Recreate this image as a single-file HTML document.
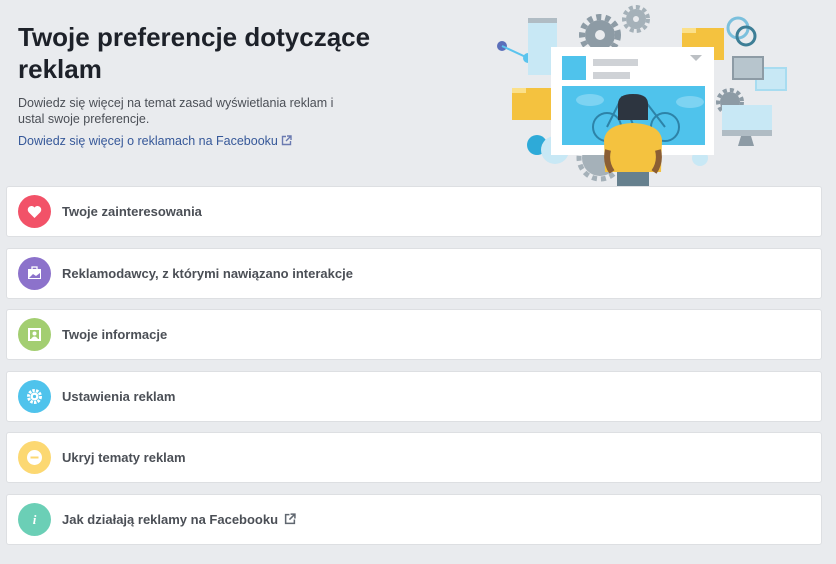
<!DOCTYPE html>
<html><head><meta charset="utf-8"><style>
body{margin:0;width:836px;height:564px;background:#e9ebee;font-family:"Liberation Sans",Arial,sans-serif;position:relative;overflow:hidden}
h1{position:absolute;left:18px;top:21px;margin:0;font-size:26px;line-height:32px;font-weight:bold;color:#1d2129;width:400px}
.d{position:absolute;left:18px;top:95px;font-size:12.5px;line-height:16px;color:#4b4f56;width:345px}
.l{position:absolute;left:18px;top:134px;font-size:12.5px;color:#365899}
.c{position:absolute;left:6px;width:814px;height:49px;background:#fff;border:1px solid #dddfe2;border-radius:3px}
.c .i{position:absolute;left:11px;top:8px;width:33px;height:33px;border-radius:50%}
.c span{position:absolute;left:55px;top:17px;font-size:13px;font-weight:bold;color:#4b4f56}
</style></head><body>
<h1>Twoje preferencje dotyczące reklam</h1>
<div class="d">Dowiedz się więcej na temat zasad wyświetlania reklam i ustal swoje preferencje.</div>
<div class="l">Dowiedz się więcej o reklamach na Facebooku <svg width="11" height="11" viewBox="0 0 11 11" style="vertical-align:-1px"><path d="M5 1.5H1.5v8h8V6" fill="none" stroke="#6a7ab0" stroke-width="1.4"/><path d="M6 1h4v4M10 1L5 6" fill="none" stroke="#6a7ab0" stroke-width="1.4"/></svg></div>

<svg style="position:absolute;left:490px;top:0" width="300" height="188" viewBox="0 0 300 188">
<circle cx="12" cy="46" r="5" fill="#5b6fba"/><path d="M12 46L38 58 58 38" stroke="#5bc4ee" stroke-width="2" fill="none"/><circle cx="38" cy="58" r="5" fill="#5bc4ee"/><circle cx="58" cy="38" r="5" fill="#5bc4ee"/>
<rect x="38" y="18" width="29" height="57" fill="#c8e8f5"/><rect x="38" y="18" width="29" height="5" fill="#b0bcc4"/>
<circle cx="110" cy="35" r="15" fill="#8d9ba5"/><circle cx="110" cy="35" r="18" fill="none" stroke="#8d9ba5" stroke-width="6" stroke-dasharray="5 4"/><circle cx="110" cy="35" r="5" fill="#e9ebee"/>
<circle cx="146" cy="19" r="10" fill="#a5b1b9"/><circle cx="146" cy="19" r="12" fill="none" stroke="#a5b1b9" stroke-width="4" stroke-dasharray="4 3"/><circle cx="146" cy="19" r="3" fill="#e9ebee"/>
<rect x="192" y="28" width="42" height="32" fill="#f4c23f"/><rect x="192" y="28" width="14" height="5" fill="#fbe08a"/>
<circle cx="248" cy="28" r="10" fill="none" stroke="#7bc0dd" stroke-width="3"/><circle cx="256" cy="36" r="9" fill="none" stroke="#3d7e96" stroke-width="3"/>
<rect x="266" y="68" width="30" height="22" fill="#c8e8f5" stroke="#a8dcf0" stroke-width="2"/><rect x="243" y="57" width="30" height="22" fill="#b7c5cd" stroke="#8d9ba5" stroke-width="2"/>
<rect x="22" y="88" width="40" height="32" fill="#f4c23f"/><rect x="22" y="88" width="14" height="5" fill="#fbe08a"/>
<circle cx="240" cy="102" r="10" fill="#8d9ba5"/><circle cx="240" cy="102" r="12" fill="none" stroke="#8d9ba5" stroke-width="4" stroke-dasharray="4 3"/>
<rect x="232" y="105" width="50" height="30" fill="#c8e8f5"/><rect x="232" y="130" width="50" height="6" fill="#b0bcc4"/><path d="M248 146h16l-3-10h-10z" fill="#8d9ba5"/>
<circle cx="47" cy="145" r="10" fill="#2eaad8"/><circle cx="65" cy="150" r="14" fill="#c8e8f5"/><circle cx="210" cy="158" r="8" fill="#c8e8f5"/>
<circle cx="110" cy="158" r="18" fill="#a5b1b9"/><circle cx="110" cy="158" r="21" fill="none" stroke="#a5b1b9" stroke-width="5" stroke-dasharray="5 4"/>
<rect x="61" y="47" width="163" height="108" fill="#fff"/>
<rect x="72" y="56" width="24" height="24" fill="#4fc3ec"/><rect x="103" y="59" width="45" height="7" fill="#cfd2d6"/><rect x="103" y="72" width="37" height="7" fill="#cfd2d6"/>
<path d="M200 55h12l-6 6z" fill="#bcc0c4"/>
<rect x="72" y="86" width="143" height="59" fill="#4fc3ec"/>
<ellipse cx="100" cy="100" rx="14" ry="6" fill="#7dd3f2"/><ellipse cx="200" cy="102" rx="14" ry="6" fill="#7dd3f2"/>
<circle cx="117" cy="127" r="14" fill="none" stroke="#2d83a8" stroke-width="2"/><circle cx="175" cy="127" r="14" fill="none" stroke="#2d83a8" stroke-width="2"/>
<path d="M117 127l15-30h20l23 30M132 97l12 30" stroke="#2d83a8" stroke-width="2" fill="none"/>
<path d="M127 188v-18h32v18z" fill="#66808e"/>
<path d="M115 172l-1-32q2-16 29-17q27 1 29 17l-1 32z" fill="#f4c23f"/>
<path d="M118 150q-3 12 4 22M168 150q3 12 -4 22" stroke="#8b5e34" stroke-width="6" fill="none"/>
<path d="M128 120v-16q0-10 15-10q15 0 15 10v16z" fill="#2d3540"/>
</svg>

<div class="c" style="top:186px"><div class="i" style="background:#f25268"><svg width="33" height="33"><path d="M16.5 23l-6-6a3.5 3.5 0 0 1 6-4.5a3.5 3.5 0 0 1 6 4.5z" fill="#fff"/></svg></div><span>Twoje zainteresowania</span></div>
<div class="c" style="top:248px"><div class="i" style="background:#8c72cb"><svg width="33" height="33"><rect x="10" y="12" width="13" height="10" fill="#fff"/><rect x="14" y="10" width="5" height="3" fill="none" stroke="#fff" stroke-width="1.3"/><path d="M11 21l4-4 3 2 4-3v5z" fill="#8c72cb"/></svg></div><span>Reklamodawcy, z którymi nawiązano interakcje</span></div>
<div class="c" style="top:309px"><div class="i" style="background:#a3ce71"><svg width="33" height="33"><rect x="10" y="10" width="13" height="13" fill="#fff"/><rect x="12" y="12" width="9" height="9" fill="#a3ce71"/><circle cx="16.5" cy="15.5" r="2" fill="#fff"/><path d="M13 21q3.5-5 7 0z" fill="#fff"/></svg></div><span>Twoje informacje</span></div>
<div class="c" style="top:371px"><div class="i" style="background:#4fc3ec"><svg width="33" height="33"><circle cx="16.5" cy="16.5" r="6" fill="none" stroke="#fff" stroke-width="3" stroke-dasharray="2.5 1.2"/><circle cx="16.5" cy="16.5" r="4" fill="#fff"/><circle cx="16.5" cy="16.5" r="1.6" fill="#4fc3ec"/></svg></div><span>Ustawienia reklam</span></div>
<div class="c" style="top:432px"><div class="i" style="background:#fcd872"><svg width="33" height="33"><circle cx="16.5" cy="16.5" r="7.5" fill="#fff"/><rect x="12.5" y="15.5" width="8" height="2" fill="#fcd872"/></svg></div><span>Ukryj tematy reklam</span></div>
<div class="c" style="top:494px"><div class="i" style="background:#6bcfb6"><svg width="33" height="33"><text x="16.5" y="21" font-family="Liberation Serif" font-style="italic" font-weight="bold" font-size="13" fill="#fff" text-anchor="middle">i</text></svg></div><span>Jak działają reklamy na Facebooku <svg width="12" height="12" viewBox="0 0 11 11" style="vertical-align:-1px;margin-left:2px"><path d="M5 1.5H1.5v8h8V6" fill="none" stroke="#606770" stroke-width="1.4"/><path d="M6 1h4v4M10 1L5 6" fill="none" stroke="#606770" stroke-width="1.4"/></svg></span></div>
</body></html>
